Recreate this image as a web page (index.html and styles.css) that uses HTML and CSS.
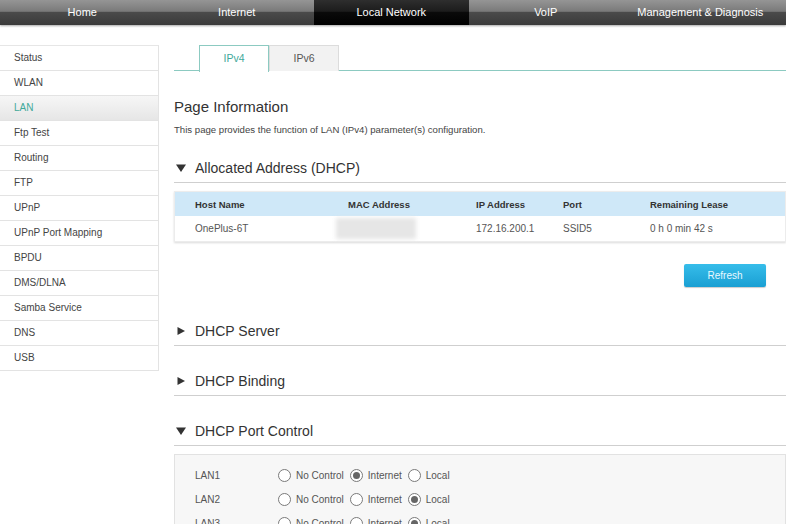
FILE: index.html
```html
<!DOCTYPE html>
<html>
<head>
<meta charset="utf-8">
<link rel="stylesheet" href="styles.css">
</head>
<body>
<nav class="topnav">
  <a class="nav-item">Home</a>
  <a class="nav-item">Internet</a>
  <a class="nav-item active">Local Network</a>
  <a class="nav-item">VoIP</a>
  <a class="nav-item">Management &amp; Diagnosis</a>
</nav>
<div class="layout">
  <ul class="sidebar">
    <li>Status</li>
    <li>WLAN</li>
    <li class="current">LAN</li>
    <li>Ftp Test</li>
    <li>Routing</li>
    <li>FTP</li>
    <li>UPnP</li>
    <li>UPnP Port Mapping</li>
    <li>BPDU</li>
    <li>DMS/DLNA</li>
    <li>Samba Service</li>
    <li>DNS</li>
    <li>USB</li>
  </ul>
  <main class="main">
    <div class="tabs">
      <div class="tab active">IPv4</div>
      <div class="tab">IPv6</div>
    </div>
    <h1 class="page-title">Page Information</h1>
    <p class="desc">This page provides the function of LAN (IPv4) parameter(s) configuration.</p>

    <div class="section-head">
      <svg class="tri" width="10" height="10" viewBox="0 0 10 10"><polygon points="0,1.5 10,1.5 5,9" fill="#333"/></svg>
      <span>Allocated Address (DHCP)</span>
    </div>
    <div class="table">
      <div class="row head">
        <div>Host Name</div><div>MAC Address</div><div>IP Address</div><div>Port</div><div>Remaining Lease</div>
      </div>
      <div class="row">
        <div>OnePlus-6T</div><div><span class="blur"></span></div><div>172.16.200.1</div><div>SSID5</div><div>0 h 0 min 42 s</div>
      </div>
    </div>
    <div class="btn-row"><button class="btn">Refresh</button></div>

    <div class="section-head first-collapsed">
      <svg class="tri" width="10" height="10" viewBox="0 0 10 10"><polygon points="1.5,1 9,5 1.5,9" fill="#333"/></svg>
      <span>DHCP Server</span>
    </div>
    <div class="section-head gap">
      <svg class="tri" width="10" height="10" viewBox="0 0 10 10"><polygon points="1.5,1 9,5 1.5,9" fill="#333"/></svg>
      <span>DHCP Binding</span>
    </div>
    <div class="section-head gap">
      <svg class="tri" width="10" height="10" viewBox="0 0 10 10"><polygon points="0,1.5 10,1.5 5,9" fill="#333"/></svg>
      <span>DHCP Port Control</span>
    </div>
    <div class="port-box">
      <div class="port-row">
        <span class="port-label">LAN1</span>
        <label class="opt"><span class="radio"></span>No Control</label>
        <label class="opt"><span class="radio on"></span>Internet</label>
        <label class="opt"><span class="radio"></span>Local</label>
      </div>
      <div class="port-row">
        <span class="port-label">LAN2</span>
        <label class="opt"><span class="radio"></span>No Control</label>
        <label class="opt"><span class="radio"></span>Internet</label>
        <label class="opt"><span class="radio on"></span>Local</label>
      </div>
      <div class="port-row">
        <span class="port-label">LAN3</span>
        <label class="opt"><span class="radio"></span>No Control</label>
        <label class="opt"><span class="radio"></span>Internet</label>
        <label class="opt"><span class="radio on"></span>Local</label>
      </div>
    </div>
  </main>
</div>
</body>
</html>
```
FILE: styles.css
```css
* { box-sizing: border-box; }
html, body { margin: 0; padding: 0; }
body {
  font-family: "Liberation Sans", Arial, sans-serif;
  color: #444;
  background: #fff;
  width: 786px;
  height: 524px;
  overflow: hidden;
}
.topnav {
  display: flex;
  height: 25px;
  padding-left: 5px;
  background: linear-gradient(to bottom, #959595 0%, #7a7a7a 45%, #4a4a4a 50%, #3a3a3a 100%);
  box-shadow: 0 1px 2px rgba(0,0,0,0.35);
  position: relative;
  z-index: 1;
}
.nav-item {
  width: 154.5px;
  text-align: center;
  color: #fff;
  font-size: 11px;
  line-height: 24px;
}
.nav-item.active {
  background: linear-gradient(to bottom, #2e2e2e 0%, #1c1c1c 45%, #0a0a0a 50%, #000 100%);
}
.layout {
  display: flex;
  align-items: flex-start;
}
.sidebar {
  list-style: none;
  margin: 20px 0 0;
  padding: 0;
  width: 159px;
  border-top: 1px solid #e6e6e6;
  border-right: 1px solid #e3e3e3;
}
.sidebar li {
  height: 25px;
  line-height: 24px;
  border-bottom: 1px solid #e3e3e3;
  padding-left: 14px;
  font-size: 10px;
  color: #444;
}
.sidebar li.current {
  color: #3fa99b;
  background: linear-gradient(to bottom, #f6f6f6, #e6e6e6);
}
.main {
  flex: 1;
  padding-left: 15px;
}
.tabs {
  display: flex;
  margin-top: 20px;
  padding-left: 25px;
  height: 26px;
  border-bottom: 1px solid #8ccac1;
}
.tab {
  width: 70px;
  height: 26px;
  line-height: 25px;
  text-align: center;
  font-size: 10.5px;
  color: #555;
  background: #f2f2f2;
  border: 1px solid #dcdcdc;
  border-bottom: none;
}
.tab.active {
  background: #fff;
  color: #3fa99b;
  border-color: #8ccac1;
  height: 27px;
}
.page-title {
  margin: 26px 0 0;
  font-size: 15px;
  font-weight: normal;
  line-height: 20px;
  color: #333;
}
.desc {
  margin: 6px 0 0;
  font-size: 9.6px;
  line-height: 14px;
  color: #444;
}
.section-head {
  display: flex;
  align-items: center;
  height: 30px;
  margin-top: 16px;
  border-bottom: 1px solid #cfcfcf;
  font-size: 14px;
  color: #333;
}
.section-head .tri {
  margin: 0 9px 0 2px;
}
.section-head.first-collapsed { margin-top: 29px; }
.section-head.gap { margin-top: 20px; }
.table {
  margin-top: 8px;
  box-shadow: 0 1px 2px rgba(0,0,0,0.15);
  border: 1px solid #ececec;
}
.row {
  display: grid;
  grid-template-columns: 153px 128px 87px 87px 1fr;
  padding-left: 20px;
  height: 25px;
  align-items: center;
  font-size: 10px;
  color: #555;
  background: #fff;
}
.row.head {
  height: 24px;
  background: #cfe8f8;
  font-weight: bold;
  font-size: 9.5px;
  color: #333;
}
.blur {
  display: block;
  width: 80px;
  height: 21px;
  margin-left: -12px;
  background: #e6e6e6;
  filter: blur(2px);
}
.btn-row {
  display: flex;
  justify-content: flex-end;
  padding-right: 20px;
  margin-top: 22px;
}
.btn {
  width: 82px;
  height: 23px;
  border: none;
  border-radius: 2px;
  background: linear-gradient(to bottom, #36bdea, #1a9fd3);
  box-shadow: 0 1px 1px rgba(0,0,0,0.2);
  color: #e8f8ff;
  font-family: "Liberation Sans", Arial, sans-serif;
  font-size: 10px;
  padding: 0;
}
.port-box {
  margin-top: 8px;
  background: #f7f7f7;
  border: 1px solid #e2e2e2;
  padding: 8px 0 0 20px;
  height: 90px;
}
.port-row {
  display: flex;
  align-items: center;
  height: 24px;
  font-size: 10px;
  color: #555;
}
.port-label {
  width: 83px;
}
.opt {
  display: flex;
  align-items: center;
  margin-right: 6px;
}
.radio {
  width: 13px;
  height: 13px;
  border: 1px solid #7a7a7a;
  border-radius: 50%;
  background: #fff;
  margin-right: 5px;
  position: relative;
}
.radio.on::after {
  content: "";
  position: absolute;
  left: 2px;
  top: 2px;
  width: 7px;
  height: 7px;
  border-radius: 50%;
  background: #666;
}
```
